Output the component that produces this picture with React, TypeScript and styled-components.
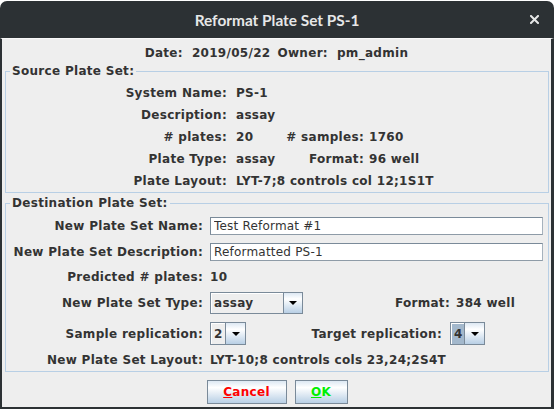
import React from "react";
import styled, { createGlobalStyle } from "styled-components";

const Global = createGlobalStyle`
  html, body { margin: 0; padding: 0; background: #ffffff; }
  body { font-family: "DejaVu Sans", sans-serif; }
  * { box-sizing: border-box; }
`;

const Window = styled.div`
  width: 554px;
  height: 408px;
  margin-top: 1px;
  display: flex;
  flex-direction: column;
`;

const TitleBar = styled.div`
  height: 37px;
  flex: none;
  background: #2c3134;
  border-radius: 7px 7px 0 0;
  display: grid;
  grid-template-columns: 1fr auto 1fr;
  align-items: center;
  color: #e6e7e7;
  font-family: Lato, "Noto Sans", sans-serif;
  font-weight: 700;
  font-size: 15.4px;
`;

const Title = styled.div`
  grid-column: 2;
`;

const Close = styled.div`
  grid-column: 3;
  justify-self: end;
  margin-right: 15px;
  display: flex;
`;

const Body = styled.div`
  flex: 1;
  background: #eeeeee;
  border-style: solid;
  border-color: #2c3134;
  border-top-color: #f8f8f8;
  border-width: 1px 3px 2px 2px;
  display: flex;
  flex-direction: column;
  color: #333333;
  font: bold 12px "DejaVu Sans", sans-serif;
  letter-spacing: 0.3px;
`;

const DateRow = styled.div`
  margin-top: 6px;
  height: 16px;
  line-height: 16px;
  display: flex;
  justify-content: center;
  gap: 7px;
`;

const Pair = styled.span`
  display: inline-flex;
  gap: 9px;
`;

const Group = styled.fieldset<{ $mt: number }>`
  margin: ${(p) => p.$mt}px 2px 0 3px;
  padding: 0;
  border: 1px solid #b8cfe5;
  min-width: 0;
`;

const Legend = styled.legend`
  margin-left: 4px;
  padding: 0 2px;
  line-height: 16px;
  font-weight: bold;
`;

const SrcRow = styled.div<{ $mt?: number }>`
  display: flex;
  align-items: center;
  height: 22px;
  margin-top: ${(p) => p.$mt ?? 0}px;
  white-space: pre;
`;

const SrcLabel = styled.span`
  flex: none;
  width: 221px;
  text-align: right;
  margin-right: 9px;
`;

const Value = styled.span<{ $w?: number }>`
  flex: none;
  ${(p) => (p.$w ? `width: ${p.$w}px;` : "")}
  white-space: pre;
`;

const SubLabel = styled.span<{ $w: number; $gap: number }>`
  flex: none;
  width: ${(p) => p.$w}px;
  text-align: right;
  margin-right: ${(p) => p.$gap}px;
`;

const DestRow = styled.div<{ $h: number; $mt: number; $mb?: number }>`
  display: flex;
  align-items: center;
  height: ${(p) => p.$h}px;
  margin-top: ${(p) => p.$mt}px;
  margin-bottom: ${(p) => p.$mb ?? 0}px;
  white-space: pre;
`;

const DestLabel = styled.span`
  flex: none;
  width: 197px;
  text-align: right;
  margin-right: 7px;
`;

const TextField = styled.input`
  flex: 1;
  min-width: 0;
  margin: 0 5px 0 0;
  height: 18px;
  border: 1px solid #7a8a99;
  border-right-color: #a6b2bd;
  border-bottom-color: #8e9ba7;
  background: #ffffff;
  padding: 0 0 0 3px;
  font: 12px "DejaVu Sans", sans-serif;
  letter-spacing: 0.2px;
  color: #333333;
  outline: none;
`;

const Combo = styled.div<{ $w: number; $h: number }>`
  flex: none;
  display: flex;
  width: ${(p) => p.$w}px;
  height: ${(p) => p.$h}px;
  border: 1px solid #7a8a99;
`;

const ComboValue = styled.div<{ $selected?: boolean }>`
  flex: 1;
  display: flex;
  align-items: center;
  padding-left: 3px;
  background: ${(p) => (p.$selected ? "#a3b8cc" : "#eeeeee")};
  box-shadow: inset 1px 1px #ffffff;
  border-right: 1px solid #7a8a99;
  font-weight: bold;
`;

const ComboArrow = styled.div<{ $w: number }>`
  flex: none;
  width: ${(p) => p.$w}px;
  display: flex;
  align-items: center;
  justify-content: center;
  background: linear-gradient(#dde8f3 0%, #ffffff 30%, #b8cfe5 100%);
`;

const Caret = styled.span`
  width: 0;
  height: 0;
  border-left: 4px solid transparent;
  border-right: 4px solid transparent;
  border-top: 4px solid #000000;
`;

const Buttons = styled.div`
  display: flex;
  justify-content: center;
  gap: 8px;
  margin-top: 8px;
  padding-left: 1px;
`;

const Button = styled.button<{ $w: number; $color: string }>`
  width: ${(p) => p.$w}px;
  height: 24px;
  padding: 0;
  border: 1px solid #7a8a99;
  background: linear-gradient(#dde8f3 0%, #ffffff 30%, #b8cfe5 100%);
  font: bold 12px "DejaVu Sans", sans-serif;
  letter-spacing: 0.3px;
  color: ${(p) => p.$color};
`;

function Dropdown(props: { w: number; h: number; arrowW: number; value: string; selected?: boolean }) {
  return (
    <Combo $w={props.w} $h={props.h}>
      <ComboValue $selected={props.selected}>{props.value}</ComboValue>
      <ComboArrow $w={props.arrowW}>
        <Caret />
      </ComboArrow>
    </Combo>
  );
}

export default function App() {
  return (
    <>
      <Global />
      <Window>
        <TitleBar>
          <Title>Reformat Plate Set PS-1</Title>
          <Close>
            <svg width="9" height="9" viewBox="0 0 9 9">
              <path d="M1 1 L8 8 M8 1 L1 8" stroke="#e6e7e7" strokeWidth="2" strokeLinecap="square" />
            </svg>
          </Close>
        </TitleBar>
        <Body>
          <DateRow>
            <Pair>
              <span>Date:</span>
              <span>2019/05/22</span>
            </Pair>
            <Pair>
              <span>Owner:</span>
              <span>pm_admin</span>
            </Pair>
          </DateRow>

          <Group $mt={2}>
            <Legend>Source Plate Set:</Legend>
            <SrcRow $mt={3}>
              <SrcLabel>System Name:</SrcLabel>
              <Value>PS-1</Value>
            </SrcRow>
            <SrcRow>
              <SrcLabel>Description:</SrcLabel>
              <Value>assay</Value>
            </SrcRow>
            <SrcRow>
              <SrcLabel># plates:</SrcLabel>
              <Value $w={40}>20</Value>
              <SubLabel $w={88} $gap={5}># samples:</SubLabel>
              <Value>1760</Value>
            </SrcRow>
            <SrcRow>
              <SrcLabel>Plate Type:</SrcLabel>
              <Value $w={40}>assay</Value>
              <SubLabel $w={88} $gap={5}>Format:</SubLabel>
              <Value>96 well</Value>
            </SrcRow>
            <SrcRow>
              <SrcLabel>Plate Layout:</SrcLabel>
              <Value>LYT-7;8 controls col 12;1S1T</Value>
            </SrcRow>
          </Group>

          <Group $mt={2}>
            <Legend>Destination Plate Set:</Legend>
            <DestRow $h={18} $mt={6}>
              <DestLabel>New Plate Set Name:</DestLabel>
              <TextField readOnly value="Test Reformat #1" />
            </DestRow>
            <DestRow $h={18} $mt={8}>
              <DestLabel>New Plate Set Description:</DestLabel>
              <TextField readOnly value="Reformatted PS-1" />
            </DestRow>
            <DestRow $h={16} $mt={8}>
              <DestLabel>Predicted # plates:</DestLabel>
              <Value>10</Value>
            </DestRow>
            <DestRow $h={22} $mt={7}>
              <DestLabel>New Plate Set Type:</DestLabel>
              <Dropdown w={93} h={22} arrowW={18} value="assay" />
              <SubLabel $w={147} $gap={6}>Format:</SubLabel>
              <Value>384 well</Value>
            </DestRow>
            <DestRow $h={23} $mt={8}>
              <DestLabel>Sample replication:</DestLabel>
              <Dropdown w={36} h={23} arrowW={19} value="2" />
              <SubLabel $w={196} $gap={8}>Target replication:</SubLabel>
              <Dropdown w={35} h={23} arrowW={19} value="4" selected />
            </DestRow>
            <DestRow $h={16} $mt={7} $mb={3}>
              <DestLabel>New Plate Set Layout:</DestLabel>
              <Value>LYT-10;8 controls cols 23,24;2S4T</Value>
            </DestRow>
          </Group>

          <Buttons>
            <Button $w={80} $color="#ff0000">
              <u>C</u>ancel
            </Button>
            <Button $w={53} $color="#00f000">
              <u>O</u>K
            </Button>
          </Buttons>
        </Body>
      </Window>
    </>
  );
}
